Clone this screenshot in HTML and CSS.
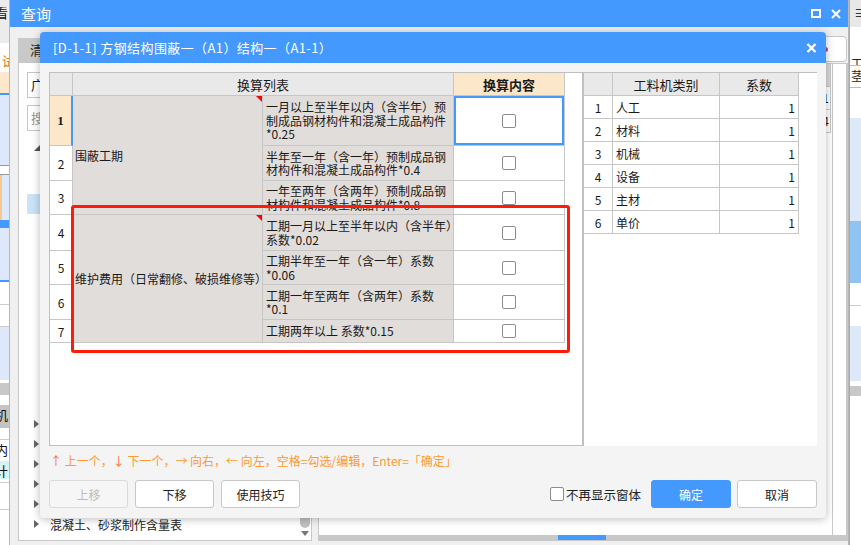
FILE: index.html
```html
<!DOCTYPE html>
<html lang="zh-CN">
<head>
<meta charset="utf-8">
<title>查询</title>
<link rel="stylesheet" href="styles.css">
</head>
<body>
<div class="desk">

  <!-- window behind, left edge -->
  <div class="win-left">
    <div class="ls ls-top"><span class="ls-ch">看</span></div>
    <div class="ls ls-w1"><span class="ls-ch2">试</span></div>
    <div class="ls ls-or"></div>
    <div class="ls ls-bl2"></div>
    <div class="ls ls-lb70"></div>
    <div class="ls ls-box"></div>
    <div class="ls ls-lb45"></div>
    <div class="ls ls-bl8"></div>
    <div class="ls ls-lb52"></div>
    <div class="ls ls-bl2"></div>
    <div class="ls ls-w23"></div>
    <div class="ls ls-w22"></div>
    <div class="ls ls-lb53"></div>
    <div class="ls ls-gap3"></div>
    <div class="ls ls-g12"></div>
    <div class="ls ls-w10"></div>
    <div class="ls ls-g23"><span class="ls-ch">机</span></div>
    <div class="ls ls-w12"></div>
    <div class="ls ls-w20"><span class="ls-ch">内</span></div>
    <div class="ls ls-cy"><span class="ls-ch">计</span></div>
    <div class="ls ls-w4"></div>
    <div class="ls ls-w27"></div>
  </div>

  <!-- main 查询 window -->
  <div class="win-main">
    <div class="main-title">
      <span>查询</span>
      <span class="main-icons">
        <svg width="10" height="9" viewBox="0 0 10 9"><rect x="1" y="1" width="8" height="7" fill="none" stroke="#fff" stroke-width="2"/></svg>
        <svg width="10" height="10" viewBox="0 0 10 10"><path d="M1 1L9 9M9 1L1 9" stroke="#fff" stroke-width="2"/></svg>
      </span>
    </div>
    <div class="main-body">
      <div class="left-col">
        <div class="tabs"><span class="tab">清单</span></div>
        <div class="tree-panel">
          <div class="inp">广东</div>
          <div class="inp ph">搜索</div>
          <div class="tree">
            <div class="tree-rows">
              <div class="tr"><span class="tri-open"></span><span class="tr-t">定额</span></div>
              <div class="tr"><span class="tr-t ind">土石方工程</span></div>
              <div class="tr"><span class="tr-t ind">桩基础工程</span></div>
              <div class="tr tr-sel"><span class="tr-t ind">砌筑工程</span></div>
              <div class="tr"></div>
              <div class="tr"></div>
              <div class="tr"></div>
              <div class="tr"></div>
              <div class="tr"></div>
              <div class="tr"></div>
              <div class="tr"></div>
              <div class="tr"></div>
              <div class="tr"></div>
              <div class="tr"></div>
              <div class="tr"><span class="tri"></span><span class="tr-t">措施项目</span></div>
              <div class="tr"><span class="tri"></span><span class="tr-t">其他项目</span></div>
              <div class="tr"><span class="tri"></span><span class="tr-t">附录</span></div>
              <div class="tr"><span class="tri"></span><span class="tr-t">机械台班</span></div>
              <div class="tr"><span class="tri"></span><span class="tr-t">材料价格</span></div>
              <div class="tr"><span class="tri"></span><span class="tr-t">混凝土、砂浆制作含量表</span></div>
            </div>
            <div class="vscroll">
              <div class="vthumb"></div>
              <div class="varrow"></div>
            </div>
          </div>
        </div>
      </div>
      <div class="right-col">
        <div class="search"><span class="search-dot"></span></div>
        <div class="rc-box">
          <div class="rc-main">
            <div class="rc-grid">
              <div class="rg-row rg-head"><span class="rg-a"></span><span class="rg-b"></span></div>
              <div class="rg-row"><span class="rg-a"></span><span class="rg-b">1</span></div>
              <div class="rg-row"><span class="rg-a"></span><span class="rg-b">4</span></div>
            </div>
            <div class="rc-side"></div>
          </div>
          <div class="hscroll"><span class="hthumb"></span></div>
        </div>
      </div>
    </div>
  </div>

  <!-- window behind, right edge -->
  <div class="win-right">
    <div class="rs rs-top"><span class="rs-ch">☰</span></div>
    <div class="rs rs-w27"></div>
    <div class="rs rs-t1"><span class="rs-ch2">工</span></div>
    <div class="rs rs-t2"><span class="rs-ch2">茎</span></div>
    <div class="rs rs-w30"></div>
    <div class="rs rs-lb103"></div>
    <div class="rs rs-bl62"></div>
    <div class="rs rs-w23"></div>
    <div class="rs rs-w20"></div>
    <div class="rs rs-lb55"></div>
    <div class="rs rs-w5"></div>
    <div class="rs rs-g10"></div>
  </div>

  <!-- dialog -->
  <div class="dialog">
    <div class="dlg-title">
      <span class="dlg-title-t">[D-1-1] 方钢结构围蔽一（A1）结构一（A1-1）</span>
      <svg width="11" height="10" viewBox="0 0 11 10"><path d="M1.5 1L9.5 9M9.5 1L1.5 9" stroke="#fff" stroke-width="2.4"/></svg>
    </div>
    <div class="dlg-body">
      <div class="panels">
        <div class="lpanel">
          <div class="ltable">
            <div class="c corner"></div>
            <div class="c hdr">换算列表</div>
            <div class="c hdr2">换算内容</div>

            <div class="c rn rn-sel">1</div>
            <div class="c grp grp3"><span class="mark"></span>围蔽工期</div>
            <div class="c sub">一月以上至半年以内（含半年）预<br>制成品钢材构件和混凝土成品构件<br>*0.25</div>
            <div class="c chk chk-sel"><span class="cb"></span></div>

            <div class="c rn">2</div>
            <div class="c sub">半年至一年（含一年）预制成品钢<br>材构件和混凝土成品构件*0.4</div>
            <div class="c chk"><span class="cb"></span></div>

            <div class="c rn">3</div>
            <div class="c sub">一年至两年（含两年）预制成品钢<br>材构件和混凝土成品构件*0.8</div>
            <div class="c chk"><span class="cb"></span></div>

            <div class="c rn">4</div>
            <div class="c grp grp4"><span class="mark"></span>维护费用（日常翻修、破损维修等）</div>
            <div class="c sub">工期一月以上至半年以内（含半年）<br>系数*0.02</div>
            <div class="c chk"><span class="cb"></span></div>

            <div class="c rn">5</div>
            <div class="c sub">工期半年至一年（含一年）系数<br>*0.06</div>
            <div class="c chk"><span class="cb"></span></div>

            <div class="c rn">6</div>
            <div class="c sub">工期一年至两年（含两年）系数<br>*0.1</div>
            <div class="c chk"><span class="cb"></span></div>

            <div class="c rn">7</div>
            <div class="c sub">工期两年以上 系数*0.15</div>
            <div class="c chk"><span class="cb"></span></div>
          </div>
        </div>
        <div class="rpanel">
          <div class="rtable">
            <div class="r rh"></div>
            <div class="r rh rc">工料机类别</div>
            <div class="r rh rc">系数</div>

            <div class="r rc">1</div><div class="r">人工</div><div class="r rr">1</div>
            <div class="r rc">2</div><div class="r">材料</div><div class="r rr">1</div>
            <div class="r rc">3</div><div class="r">机械</div><div class="r rr">1</div>
            <div class="r rc">4</div><div class="r">设备</div><div class="r rr">1</div>
            <div class="r rc">5</div><div class="r">主材</div><div class="r rr">1</div>
            <div class="r rc">6</div><div class="r">单价</div><div class="r rr">1</div>
          </div>
        </div>
      </div>
      <div class="hint"><span class="arr">↑</span> 上一个，<span class="arr">↓</span> 下一个，→ 向右，← 向左，空格=勾选/编辑，Enter=「确定」</div>
      <div class="btns">
        <button class="btn btn-dis">上移</button>
        <button class="btn">下移</button>
        <button class="btn">使用技巧</button>
        <span class="spacer"></span>
        <label class="nomore"><span class="cb"></span>不再显示窗体</label>
        <button class="btn btn-ok">确定</button>
        <button class="btn btn-cancel">取消</button>
      </div>
      <div class="redbox"></div>
    </div>
  </div>

</div>
</body>
</html>
```

FILE: styles.css
```css
* { box-sizing: border-box; margin: 0; padding: 0; }
html, body { width: 861px; height: 545px; overflow: hidden; }
body {
  font-family: "Noto Sans CJK SC", "Noto Sans", sans-serif;
  font-size: 12px;
  color: #222;
  background: #f0f0f0;
}
.desk { position: relative; width: 861px; height: 545px; overflow: hidden; }

/* ---------- left background window ---------- */
.win-left {
  position: absolute; left: 0; top: 0; width: 9px; height: 545px;
  background: #fff; display: flex; flex-direction: column; overflow: hidden;
}
.ls { flex: none; width: 100%; overflow: hidden; white-space: nowrap; }
.ls-ch { display: block; margin-left: -5px; font-size: 13px; line-height: 20px; color: #111; }
.ls-ch2 { display: block; margin-left: 2px; font-size: 13px; line-height: 20px; color: #d77a1a; padding-top: 8px; }
.ls-top { height: 43px; background: #ececec; padding-top: 3px; }
.ls-w1 { height: 29px; }
.ls-or { height: 21px; background: #fde8cc; }
.ls-bl2 { height: 2px; background: #4499ff; }
.ls-lb70 { height: 70px; background: #dde9fa; }
.ls-box { height: 10px; border-top: 1px solid #999; border-bottom: 1px solid #999; }
.ls-lb45 { height: 45px; background: #dde9fa; border-left: 2px solid #f8c78d; }
.ls-bl8 { height: 8px; background: #4499ff; }
.ls-lb52 { height: 52px; background: #dde9fa; }
.ls-w23 { height: 23px; border-bottom: 1px solid #ccc; }
.ls-w22 { height: 22px; border-bottom: 1px solid #ccc; }
.ls-lb53 { height: 53px; background: #dde9fa; }
.ls-gap3 { height: 3px; }
.ls-g12 { height: 12px; background: #c8c8c8; }
.ls-w10 { height: 10px; }
.ls-g23 { height: 23px; background: #c4c4c4; }
.ls-w12 { height: 12px; border-bottom: 1px solid #ccc; }
.ls-w20 { height: 21px; }
.ls-cy { height: 18px; background: #d6f4f4; }
.ls-w4 { height: 4px; border-bottom: 1px solid #ccc; }
.ls-w27 { height: 27px; border-bottom: 1px solid #ccc; }

/* ---------- main 查询 window ---------- */
.win-main {
  position: absolute; left: 9px; top: 0; width: 840px; height: 545px;
  background: #f0f0f0;
  border-left: 1px solid #b8b8b8; border-right: 1px solid #b8b8b8;
  display: flex; flex-direction: column;
}
.main-title {
  height: 27px; flex: none; background: #4499ff; color: #fff;
  display: flex; align-items: center; justify-content: space-between;
  padding: 0 7px 0 11px; font-size: 15px;
}
.main-icons { display: flex; align-items: center; gap: 10px; }
.main-body { flex: 1; display: flex; gap: 6px; padding: 0 0 4px 8px; min-height: 0; }
.left-col { width: 294px; display: flex; flex-direction: column; padding-top: 11px; }
.tabs { height: 24px; display: flex; }
.tab { background: #c9c9c9; padding: 0 12px; line-height: 24px; font-size: 13px; }
.tree-panel {
  flex: 1; background: #fff; border: 1px solid #c8c8c8;
  padding: 9px 0 0 8px; display: flex; flex-direction: column; min-height: 0;
}
.inp {
  height: 26px; width: 276px; border: 1px solid #c6c6c6; background: #fff;
  padding-left: 3px; line-height: 24px; font-size: 13px; margin-bottom: 7px; flex: none;
}
.inp.ph { color: #999; margin-bottom: 3px; }
.tree { flex: 1; display: flex; margin-left: -8px; min-height: 0; }
.tree-rows { flex: 1; overflow: hidden; }
.tr { height: 20px; display: flex; align-items: center; white-space: nowrap; }
.tr-sel { background: #cae3f8; margin-left: 8px; }
.tri { width: 0; height: 0; margin-left: 15px; border-left: 5px solid #666; border-top: 4px solid transparent; border-bottom: 4px solid transparent; }
.tri-open { width: 0; height: 0; margin: 8px 0 0 15px; border-right: 6px solid #555; border-top: 6px solid transparent; }
.tr-t { margin-left: 11px; font-size: 12px; }
.tr-t.ind { margin-left: 42px; }
.vscroll { width: 12px; margin-right: 0; display: flex; flex-direction: column; justify-content: flex-end; align-items: center; }
.vthumb { width: 10px; height: 16px; background: #c1c1c1; border-radius: 5px; margin-bottom: 3px; }
.varrow { width: 0; height: 0; border-top: 5px solid #777; border-left: 4px solid transparent; border-right: 4px solid transparent; margin-bottom: 4px; }

.right-col { flex: 1; display: flex; flex-direction: column; padding-top: 9px; }
.search {
  height: 26px; flex: none; background: #fff; border: 1px solid #c6c6c6; border-radius: 4px;
  margin-right: 1px; margin-bottom: 1px; position: relative;
}
.search-dot { position: absolute; right: 18px; top: 10px; width: 6px; height: 5px; border-radius: 3px; background: #b04a8a; }
.rc-box { flex: 1; background: #fff; border: 1px solid #c8c8c8; display: flex; flex-direction: column; min-height: 0; }
.rc-main { flex: 1; display: flex; }
.rc-grid { flex: 1; }
.rg-row { height: 23px; display: flex; border-bottom: 1px solid #c6c6c6; }
.rg-head { background: #d9d9d9; }
.rg-a { flex: 1; border-right: 1px solid #c6c6c6; }
.rg-b { width: 60px; border-right: 1px solid #c6c6c6; text-align: right; padding-right: 1px; line-height: 22px; font-size: 12px; }
.rc-side { width: 15px; border-left: 1px solid #c8c8c8; border-right: 1px solid #c8c8c8; margin-left: 1px; }
.hscroll { height: 5px; background: #c8c8c8; flex: none; }
.hthumb { display: block; margin-left: 239px; width: 48px; height: 5px; background: #4499ff; }

/* ---------- right background window ---------- */
.win-right {
  position: absolute; left: 849px; top: 0; width: 12px; height: 545px;
  background: #fff; border-left: 1px solid #aaa; display: flex; flex-direction: column; overflow: hidden;
}
.rs { flex: none; overflow: hidden; white-space: nowrap; }
.rs-ch { display: block; margin-left: 5px; font-size: 11px; line-height: 24px; color: #333; }
.rs-ch2 { display: block; margin-left: 1px; font-size: 12px; line-height: 20px; color: #222; }
.rs-top { height: 27px; background: #e8e8e8; }
.rs-w27 { height: 27px; }
.rs-t1 { height: 12px; border-bottom: 1px solid #bbb; }
.rs-t2 { height: 22px; border-bottom: 1px solid #bbb; }
.rs-w30 { height: 30px; }
.rs-lb103 { height: 103px; background: #dde9f8; }
.rs-bl62 { height: 62px; background: #8fc3f2; }
.rs-w23 { height: 23px; border-bottom: 1px solid #ccc; }
.rs-w20 { height: 20px; }
.rs-lb55 { height: 55px; background: #dde9f8; }
.rs-w5 { height: 5px; }
.rs-g10 { height: 10px; background: #c8c8c8; }

/* ---------- dialog ---------- */
.dialog {
  position: absolute; left: 40px; top: 32px; width: 786px; height: 486px;
  background: #f4f4f4; border-radius: 4px; overflow: hidden;
  box-shadow: 0 1px 8px rgba(0,0,0,0.28);
  display: flex; flex-direction: column;
}
.dlg-title {
  height: 31px; flex: none; background: #4499ff; color: #fff;
  display: flex; align-items: center; justify-content: space-between;
  padding: 0 9px 0 13px; font-size: 13px;
}
.dlg-title-t { letter-spacing: 0.4px; }
.dlg-body { position: relative; flex: 1; padding: 9px 9px 10px 9px; display: flex; flex-direction: column; }
.panels { height: 374px; display: flex; flex: none; }
.lpanel { width: 534px; background: #fff; border: 1px solid #c0c0c0; overflow: hidden; }
.rpanel { width: 234px; background: #fff; border-left: 1px solid #c0c0c0; border-top: 1px solid #c0c0c0; }

.ltable {
  display: grid;
  grid-template-columns: 23px 190px 191px 111px;
  grid-template-rows: 23px 50px 35px 34px 36px 34px 35px 23px;
}
.c {
  border-right: 1px solid #c6c6c6; border-bottom: 1px solid #c6c6c6;
  display: flex; align-items: center; overflow: hidden; position: relative;
  font-size: 12px; color: #1a1a1a;
}
.corner { background: #e9e9e9; }
.hdr { grid-column: span 2; background: #e9e9e9; justify-content: center; font-size: 13px; }
.hdr2 { background: #fde7ca; justify-content: center; font-weight: bold; font-size: 13px; }
.rn { justify-content: center; background: #fff; }
.rn-sel { background: #fde7ca; font-family: "Liberation Serif", serif; font-weight: bold; font-size: 13px; border-right: 2px solid #4499ff; }
.grp { background: #e1ddda; padding-left: 2px; white-space: nowrap; }
.grp3 { grid-row: span 3; }
.grp4 { grid-row: span 4; }
.mark { position: absolute; top: 0; right: 0; width: 0; height: 0; border-top: 6px solid #f00; border-left: 6px solid transparent; }
.sub { background: #e1ddda; padding: 0 3px; line-height: 13.5px; white-space: nowrap; }
.chk { background: #fff; justify-content: center; }
.chk-sel { box-shadow: inset 0 0 0 2px #4499ff; }
.cb { display: inline-block; width: 14px; height: 14px; border: 1px solid #8c8c8c; border-radius: 2px; background: #fff; flex: none; }

.rtable { display: grid; grid-template-columns: 29px 107px 79px; grid-auto-rows: 23px; }
.r {
  border-right: 1px solid #c6c6c6; border-bottom: 1px solid #c6c6c6;
  display: flex; align-items: center; padding-left: 3px; font-size: 12px; color: #1a1a1a;
}
.rh { background: #e9e9e9; font-size: 13px; }
.rc { justify-content: center; padding-left: 0; }
.rr { justify-content: flex-end; padding-right: 3px; }

.hint { height: 30px; line-height: 30px; color: #ff9a30; font-size: 12px; padding-left: 1px; flex: none; }
.arr { color: #ff6a3a; }
.btns { height: 28px; margin-top: 4px; display: flex; align-items: stretch; gap: 7px; flex: none; }
.btn {
  width: 79px; height: 28px; background: #fff; border: 1px solid #c8c8c8; border-radius: 3px;
  font-family: "Noto Sans CJK SC", sans-serif; font-size: 12px; color: #222;
}
.btn-dis { color: #bdbdbd; border-color: #dadada; background: #f6f6f6; }
.spacer { flex: 1; }
.nomore { display: flex; align-items: center; gap: 2px; font-size: 12.5px; margin-right: 3px; }
.btn-ok { width: 80px; background: #4499ff; border-color: #4499ff; color: #fff; }
.btn-cancel { width: 80px; margin-left: -1px; }
.redbox {
  position: absolute; left: 31px; top: 142px; width: 499px; height: 148px;
  border: 3px solid #ff1a0a; border-radius: 3px; pointer-events: none;
}
```
